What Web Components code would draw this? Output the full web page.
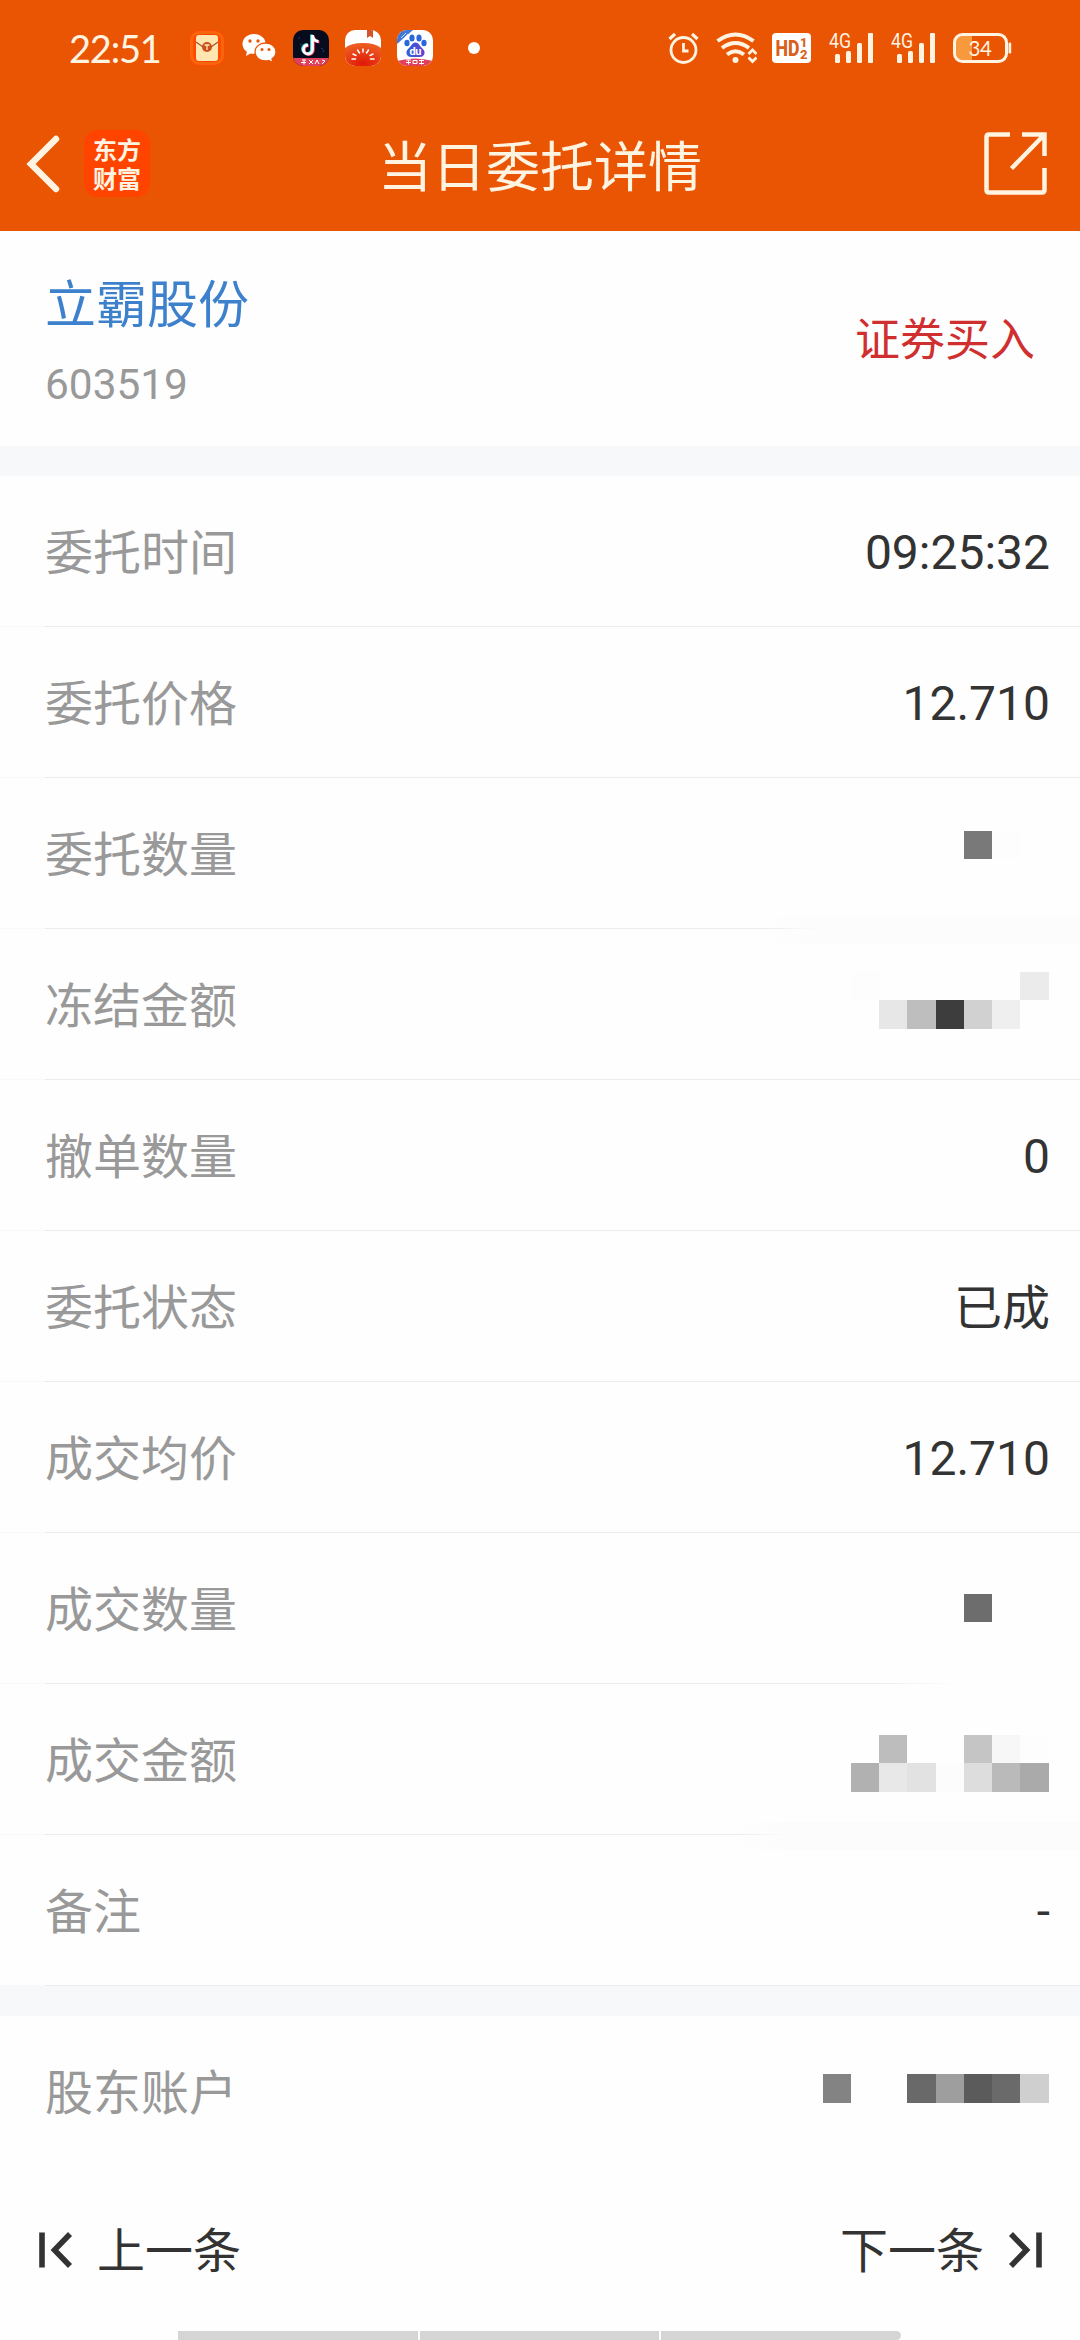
<!DOCTYPE html>
<html lang="zh-CN">
<head>
<meta charset="UTF-8">
<title>当日委托详情</title>
<style>
    * { box-sizing: border-box; }

    body {
        margin: 0;
        width: 1080px;
        height: 2340px;
        overflow: hidden;
        background: #fefefe;
        color: #333;
        font-family: Roboto, "Noto Sans CJK SC", sans-serif;
    }
</style>
</head>
<body>
<order-page>
    <status-bar slot="top" time="22:51" battery="34"></status-bar>
    <app-bar slot="top" heading="当日委托详情" brand="东方财富"></app-bar>

    <stock-summary code="603519" action="证券买入">立霸股份</stock-summary>
    <section-gap></section-gap>

    <detail-row label="委托时间">09:25:32</detail-row>
    <detail-row label="委托价格">12.710</detail-row>
    <detail-row label="委托数量" smear="320">
        <pixel-mask style="margin-bottom: 16px" heights="28" cells="- - - - - #797979 #fdfdfd -"></pixel-mask>
    </detail-row>
    <detail-row label="冻结金额">
        <pixel-mask style="margin-bottom: 7px" heights="28,29" cells="- #fdfdfd - - - - - #ebebeb / - - #e7e7e7 #bebebe #3d3d3d #d1d1d1 #efefef -"></pixel-mask>
    </detail-row>
    <detail-row label="撤单数量">0</detail-row>
    <detail-row label="委托状态" cjk>已成</detail-row>
    <detail-row label="成交均价">12.710</detail-row>
    <detail-row label="成交数量" fade>
        <pixel-mask heights="28" cells="- - - - - #6d6d6d - -"></pixel-mask>
    </detail-row>
    <detail-row label="成交金额" smear="350">
        <pixel-mask style="margin-top: 9px" heights="28,29" cells="- - #bdbdbd - - #c5c5c5 #f7f7f7 #fdfdfd / - #b1b1b1 #e8e8e8 #e2e2e2 #fcfcfc #dddddd #bababa #aaaaaa"></pixel-mask>
    </detail-row>
    <detail-row label="备注">-</detail-row>
    <section-gap></section-gap>
    <detail-row label="股东账户" last>
        <pixel-mask style="margin-bottom: 5px" heights="29" cells="#838383 - - #696969 #9e9e9e #5b5b5b #6a6a6a #cfcfcf"></pixel-mask>
    </detail-row>

    <pager-bar slot="bottom" prev="上一条" next="下一条"></pager-bar>
    <gesture-bar slot="bottom"></gesture-bar>
</order-page>

<script>
class OrderPage extends HTMLElement {
    constructor() {
        super();
        this.attachShadow({ mode: "open" }).innerHTML = `
            <style>
                :host { display: flex; flex-direction: column; height: 2340px; }
                header { background: #ea5504; height: 231px; flex: none; }
                main { flex: 1; }
            </style>
            <header><slot name="top"></slot></header>
            <main><slot></slot></main>
            <footer><slot name="bottom"></slot></footer>
        `;
    }
}

// Signal strength icon, drawn once per SIM
const signal = `
    <svg width="45" height="42" viewBox="0 -5 45 42">
        <text x="0" y="15.5" font-size="19.5" textLength="22" lengthAdjust="spacingAndGlyphs">4G</text>
        <rect x="6" y="22" width="5" height="9" rx="1.5"/>
        <rect x="17" y="19" width="5" height="12" rx="1.5"/>
        <rect x="28" y="11" width="5" height="20" rx="1.5"/>
        <rect x="39" y="1" width="5" height="30" rx="1"/>
    </svg>`;

class StatusBar extends HTMLElement {
    constructor() {
        super();
        this.attachShadow({ mode: "open" });
    }

    connectedCallback() {
        this.shadowRoot.innerHTML = `
            <style>
                :host {
                    display: flex;
                    align-items: center;
                    height: 96px;
                    padding: 0 68px 0 69px;
                    color: #fff4e2;
                    fill: #fff4e2;
                }
                svg { display: block; flex: none; }
                .time { font: 400 38px/1 Lato, sans-serif; letter-spacing: -1.2px; width: 120px; padding-bottom: 1px; }
                .apps, .system { display: flex; align-items: center; }
                .apps { gap: 16px; }
                .dot { width: 12px; height: 12px; border-radius: 50%; background: #fff; margin-left: 19px; }
                .system { margin-left: auto; }
            </style>
            <div class="time">${this.getAttribute("time")}</div>
            <div class="apps">
                <svg width="36" height="36" viewBox="0 0 36 36">
                    <rect width="36" height="36" rx="10" fill="#ff4a00"/>
                    <rect x="2.5" y="2.5" width="31" height="31" rx="8" fill="none" stroke="#f8650f" stroke-width="3"/>
                    <rect x="7" y="5" width="22" height="26" rx="3" fill="#ffe6b0"/>
                    <path d="M7 12L14 17M22 17L29 12" fill="none" stroke="#a8502a" stroke-width="1.2"/>
                    <circle cx="18" cy="17" r="5" fill="#c9501e"/>
                    <path d="M15.5 15h5M18 15v5" stroke="#ffe6b0" stroke-width="1.3"/>
                </svg>
                <svg width="36" height="36" viewBox="0 0 36 36">
                    <path d="M13 4C6.500 4 1.500 8.300 1.500 14c0 3.200 1.700 6 4.400 7.800L5 26l4.600-2.600c1.100.3 2.200.4 3.400.4 6.500 0 11.700-4.200 11.700-9.800S19.500 4 13 4z" fill="#fff"/>
                    <circle cx="9" cy="11" r="1.7" fill="#ea5504"/><circle cx="17" cy="11" r="1.7" fill="#ea5504"/>
                    <path d="M24.500 13C18.500 13 14 17 14 22s4.500 9 10.500 9c1.200 0 2.300-.2 3.300-.5L32 32.500l-1-3.600c2.500-1.700 4-4.100 4-6.900 0-5-4.500-9-10.500-9z" fill="#fff" stroke="#ea5504" stroke-width="1.3"/>
                    <circle cx="21" cy="19.5" r="1.5" fill="#ea5504"/><circle cx="28" cy="19.5" r="1.5" fill="#ea5504"/>
                </svg>
                <svg width="36" height="36" viewBox="0 0 36 36">
                    <defs><clipPath id="a"><rect width="36" height="36" rx="10"/></clipPath></defs>
                    <g clip-path="url(#a)">
                        <rect width="36" height="36" fill="#060b1e"/>
                        <g fill="none" stroke-width="2.8">
                            <path d="M19.500 5v14.500a4.500 4.500 0 1 1-4.500-4.500M19.500 6q1 5 6 5.500" stroke="#38dfe2" transform="translate(-1 -.6)"/>
                            <path d="M19.500 5v14.500a4.500 4.500 0 1 1-4.500-4.500M19.500 6q1 5 6 5.500" stroke="#f5345c" transform="translate(.9 .6)"/>
                            <path d="M19.500 5v14.500a4.500 4.500 0 1 1-4.500-4.500M19.500 6q1 5 6 5.500" stroke="#fff"/>
                        </g>
                        <path d="M5 9l2-2M7 15l2-1M28 18l2 1M30 22l1-2" stroke="#24406e" stroke-width="1"/>
                        <path d="M0 28H36V36H0z" fill="#e0405c"/>
                        <path d="M9 30h4M8 32.500h5M11 29.500v5M16 30l4 4M20 30l-4 4M22 34l2-4 2 4M29 30l3 1-3 3" fill="none" stroke="#fff" stroke-width="1"/>
                    </g>
                </svg>
                <svg width="36" height="36" viewBox="0 0 36 36">
                    <defs>
                        <clipPath id="b"><rect width="36" height="36" rx="10"/></clipPath>
                        <radialGradient id="c" cx=".5" cy=".9" r=".8"><stop offset="0" stop-color="#e01808"/><stop offset="1" stop-color="#ec5a20"/></radialGradient>
                    </defs>
                    <g clip-path="url(#b)">
                        <rect width="36" height="36" fill="#fff"/>
                        <path d="M22 0h6v8l-3-2-3 2z" fill="#d4522c"/>
                        <path d="M0 18Q6 13 18 13t18 5V36H0z" fill="url(#c)"/>
                        <path d="M18 19v3M12.500 20l2 3M23.500 20l-2 3M8 24l3 1.500M28 24l-3 1.500M7 29h3.500M29 29h-3.500" stroke="#fff" stroke-width="1.5" stroke-linecap="round"/>
                    </g>
                </svg>
                <svg width="36" height="36" viewBox="0 0 36 36">
                    <defs>
                        <clipPath id="d"><rect width="36" height="36" rx="10"/></clipPath>
                        <linearGradient id="e" x2="1"><stop offset="0" stop-color="#2a62dc"/><stop offset="1" stop-color="#6a3fd0"/></linearGradient>
                    </defs>
                    <g clip-path="url(#d)">
                        <rect width="36" height="36" fill="#fff"/>
                        <path d="M0 0h16L0 14z" fill="#3f78d8"/>
                        <path d="M4 8l5-5M6 9l5-5" stroke="#cfe0ff" stroke-width="1"/>
                        <g fill="#2a66dc">
                            <ellipse cx="10" cy="13" rx="2.6" ry="3.3"/><ellipse cx="15" cy="8" rx="2.6" ry="3.5"/>
                            <ellipse cx="22" cy="8" rx="2.6" ry="3.5"/><ellipse cx="27" cy="13" rx="2.6" ry="3.3"/>
                        </g>
                        <path d="M18.500 12.500c3 0 4 3 6 5s3.500 3.500 3 6-2.500 3.500-5 3.500h-8c-2.500 0-4.500-1-5-3.500s1-4 3-6 3-5 6-5z" fill="url(#e)"/>
                        <text x="12.5" y="25" font-size="11" font-weight="700" fill="#fff" textLength="12">du</text>
                        <path d="M0 31Q18 26 36 31V36H0z" fill="#e0405c"/>
                        <path d="M9 30h5M9 32.500h5M11.500 29.500v5M16 30.500h4v3h-4zM22 30.500h5M22 33.500h5M24.500 29.500v5" fill="none" stroke="#fff" stroke-width="1"/>
                    </g>
                </svg>
                <div class="dot"></div>
            </div>
            <div class="system">
                <svg width="31" height="32" viewBox="0 0 31 32" style="margin-right: 17px">
                    <g fill="none" stroke="#fff4e2" stroke-width="2.8">
                        <circle cx="15.5" cy="18" r="12.5"/>
                        <path d="M15.500 11v8h5"/>
                        <path d="M1.500 7L7 2M24 2l5.500 5" stroke-width="3.2"/>
                    </g>
                </svg>
                <svg width="41" height="32" viewBox="0 0 41 32" style="margin-right: 15px">
                    <g fill="none" stroke="#fff4e2" stroke-width="4">
                        <path d="M1.500 9Q19.500-4 37.500 9"/>
                        <path d="M6 16Q19.500 6 33 16"/>
                        <path d="M11 22.500Q19.500 16 28 22.500"/>
                        <path d="M32.500 22l4-4 4 4M32.500 25.500l4 4 4-4" stroke-width="2.8"/>
                    </g>
                    <circle cx="19.5" cy="28" r="3"/>
                </svg>
                <svg width="39" height="30" viewBox="0 0 39 30" style="margin-right: 18px">
                    <rect width="39" height="30" rx="4" fill="#fff"/>
                    <g fill="#d9601c" font-weight="800">
                        <text x="3.5" y="23" font-size="21.5" textLength="24" lengthAdjust="spacingAndGlyphs">HD</text>
                        <text x="28" y="14" font-size="13">1</text>
                        <text x="28" y="25.5" font-size="13">2</text>
                    </g>
                </svg>
                <div style="margin-right: 17px">${signal}</div>
                <div style="margin-right: 17px">${signal}</div>
                <svg width="59" height="30" viewBox="0 0 59 30">
                    <path d="M10 3h9v24h-9q-7 0-7-7V10q0-7 7-7z" fill="#f7993c"/>
                    <rect x="1.5" y="1.5" width="52" height="27" rx="8" fill="none" stroke="#fff4e2" stroke-width="3"/>
                    <rect x="55.5" y="9.5" width="2.7" height="11" rx="1.2"/>
                    <text x="15.5" y="22.5" font-size="20.5" font-family="Lato" font-weight="400" textLength="23.5">${this.getAttribute("battery")}</text>
                </svg>
            </div>
        `;
    }
}

class AppBar extends HTMLElement {
    constructor() {
        super();
        this.attachShadow({ mode: "open" });
    }

    connectedCallback() {
        this.shadowRoot.innerHTML = `
            <style>
                :host {
                    display: grid;
                    grid-template-columns: 1fr auto 1fr;
                    align-items: center;
                    height: 135px;
                    padding: 0 33px 0 26px;
                    color: #fff4e2;
                }
                svg { display: block; }
                .left { display: flex; align-items: center; gap: 23px; }
                .brand {
                    box-sizing: border-box;
                    width: 66px;
                    height: 67px;
                    border-radius: 14px;
                    background: #ff4400;
                    font-family: "Noto Sans CJK SC", sans-serif;
                    font-weight: 700;
                    font-size: 24px;
                    line-height: 29px;
                    padding: 4px 9px;
                    word-break: break-all;
                }
                h1 { margin: 10px 0 0 7px; font-size: 54px; line-height: 72px; font-weight: 400; }
                .share { justify-self: end; }
            </style>
            <div class="left">
                <svg width="35" height="58" viewBox="0 0 35 58">
                    <path d="M30 4L5 29l25 25" fill="none" stroke="#fff4e2" stroke-width="6.5" stroke-linecap="round"/>
                </svg>
                <div class="brand">${this.getAttribute("brand")}</div>
            </div>
            <h1>${this.getAttribute("heading")}</h1>
            <svg class="share" width="63" height="63" viewBox="0 0 63 63">
                <path d="M26 2.500H5Q2.500 2.500 2.500 5V58Q2.500 60.500 5 60.500H58Q60.500 60.500 60.500 58V36M38 2.500H60.500V24M60 3L27.500 36.500" fill="none" stroke="#fff4e2" stroke-width="4.5"/>
            </svg>
        `;
    }
}

class StockSummary extends HTMLElement {
    constructor() {
        super();
        this.attachShadow({ mode: "open" });
    }

    connectedCallback() {
        this.shadowRoot.innerHTML = `
            <style>
                :host {
                    display: flex;
                    justify-content: space-between;
                    align-items: center;
                    height: 215px;
                    padding: 0 45px;
                }
                .name { color: #3d80cc; font-size: 51px; line-height: 76px; margin-top: 3px; }
                .code { color: #999; font-size: 42.4px; line-height: 56px; margin-top: 13px; }
                .action { color: #d02f2f; font-size: 45px; line-height: 64px; margin-top: 5px; }
            </style>
            <div>
                <div class="name"><slot></slot></div>
                <div class="code">${this.getAttribute("code")}</div>
            </div>
            <div class="action">${this.getAttribute("action")}</div>
        `;
    }
}

class SectionGap extends HTMLElement {
    constructor() {
        super();
        this.attachShadow({ mode: "open" }).innerHTML = `
            <style>
                :host { display: block; height: 30px; background: #f7f8fa; }
            </style>
        `;
    }
}

class DetailRow extends HTMLElement {
    constructor() {
        super();
        this.attachShadow({ mode: "open" });
    }

    connectedCallback() {
        const smear = this.getAttribute("smear");
        this.shadowRoot.innerHTML = `
            <style>
                :host { display: block; position: relative; }
                .row {
                    display: flex;
                    align-items: center;
                    justify-content: space-between;
                    height: 150px;
                    padding: 0 30px 0 45px;
                    font-size: 48px;
                    line-height: 70px;
                }
                .label { color: #999; padding-top: 5px; }
                .value { display: flex; }
                /* plain text sits a little lower than the masks */
                :host(:not(:has(pixel-mask))) .value { padding-top: 3px; }
                :host([cjk]) .value { padding-top: 5px; }
                .line {
                    height: 1px;
                    background: linear-gradient(90deg, #f8f8f8 45px, #ebebeb 45px);
                }
                :host([fade]) .line {
                    background: linear-gradient(90deg, #f8f8f8 45px, #ebebeb 45px, #ebebeb 870px, #fefefe 960px);
                }
                :host([last]) .line { display: none; }
                /* soft band left over the divider */
                .smear {
                    position: absolute;
                    right: 0;
                    bottom: -15px;
                    height: 28px;
                    z-index: 1;
                    background: linear-gradient(90deg, #fcfcfc00, #fcfcfc 60px);
                }
            </style>
            <div class="row">
                <span class="label">${this.getAttribute("label")}</span>
                <span class="value"><slot></slot></span>
            </div>
            <div class="line"></div>
            ${smear ? `<div class="smear" style="width: ${smear}px"></div>` : ""}
        `;

        if (!this.querySelector("pixel-mask") && !this.hasAttribute("cjk")) {
            this.shadowRoot.querySelector(".value").style.paddingTop = "3px";
        }
    }
}

// Mosaic that hides a value: rows split by "/", "-" is an empty cell
class PixelMask extends HTMLElement {
    constructor() {
        super();
        this.attachShadow({ mode: "open" });
    }

    connectedCallback() {
        const rows = this.getAttribute("heights").split(",").map((h) => h + "px").join(" ");
        const cells = this.getAttribute("cells").replace("/ ", "").split(" ");
        this.shadowRoot.innerHTML = `
            <style>
                :host {
                    display: grid;
                    grid-template-columns: 28px 28px 28px 29px 28px 28px 28px 29px;
                    grid-template-rows: ${rows};
                    margin-right: 1px;
                }
            </style>
            ${cells.map((c) => `<i style="background: ${c === "-" ? "none" : c}"></i>`).join("")}
        `;
    }
}

class PagerBar extends HTMLElement {
    constructor() {
        super();
        this.attachShadow({ mode: "open" });
    }

    connectedCallback() {
        this.shadowRoot.innerHTML = `
            <style>
                :host {
                    display: flex;
                    justify-content: space-between;
                    align-items: center;
                    height: 163px;
                    padding: 0 38px 0 39px;
                    font-size: 48px;
                    line-height: 70px;
                }
                div { display: flex; align-items: center; gap: 24px; }
                span { padding-top: 4px; }
                svg { display: block; }
            </style>
            <div>
                <svg width="34" height="36" viewBox="0 0 34 36">
                    <path d="M3 .500v35M31 2L15.500 18 31 34" fill="none" stroke="#333" stroke-width="5.6"/>
                </svg>
                <span>${this.getAttribute("prev")}</span>
            </div>
            <div>
                <span>${this.getAttribute("next")}</span>
                <svg width="34" height="36" viewBox="0 0 34 36">
                    <path d="M31 .500v35M3 2L18.500 18 3 34" fill="none" stroke="#333" stroke-width="5.6"/>
                </svg>
            </div>
        `;
    }
}

class GestureBar extends HTMLElement {
    constructor() {
        super();
        this.attachShadow({ mode: "open" }).innerHTML = `
            <style>
                :host { display: flex; gap: 2px; height: 9px; width: 723px; margin-left: 178px; }
                i { flex: 1; background: #d5d5d5; }
                i:first-child { border-radius: 5px 0 0 5px; }
                i:last-child { border-radius: 0 5px 5px 0; }
            </style>
            <i></i><i></i><i></i>
        `;
    }
}

customElements.define("order-page", OrderPage);
customElements.define("status-bar", StatusBar);
customElements.define("app-bar", AppBar);
customElements.define("stock-summary", StockSummary);
customElements.define("section-gap", SectionGap);
customElements.define("detail-row", DetailRow);
customElements.define("pixel-mask", PixelMask);
customElements.define("pager-bar", PagerBar);
customElements.define("gesture-bar", GestureBar);
</script>
</body>
</html>
